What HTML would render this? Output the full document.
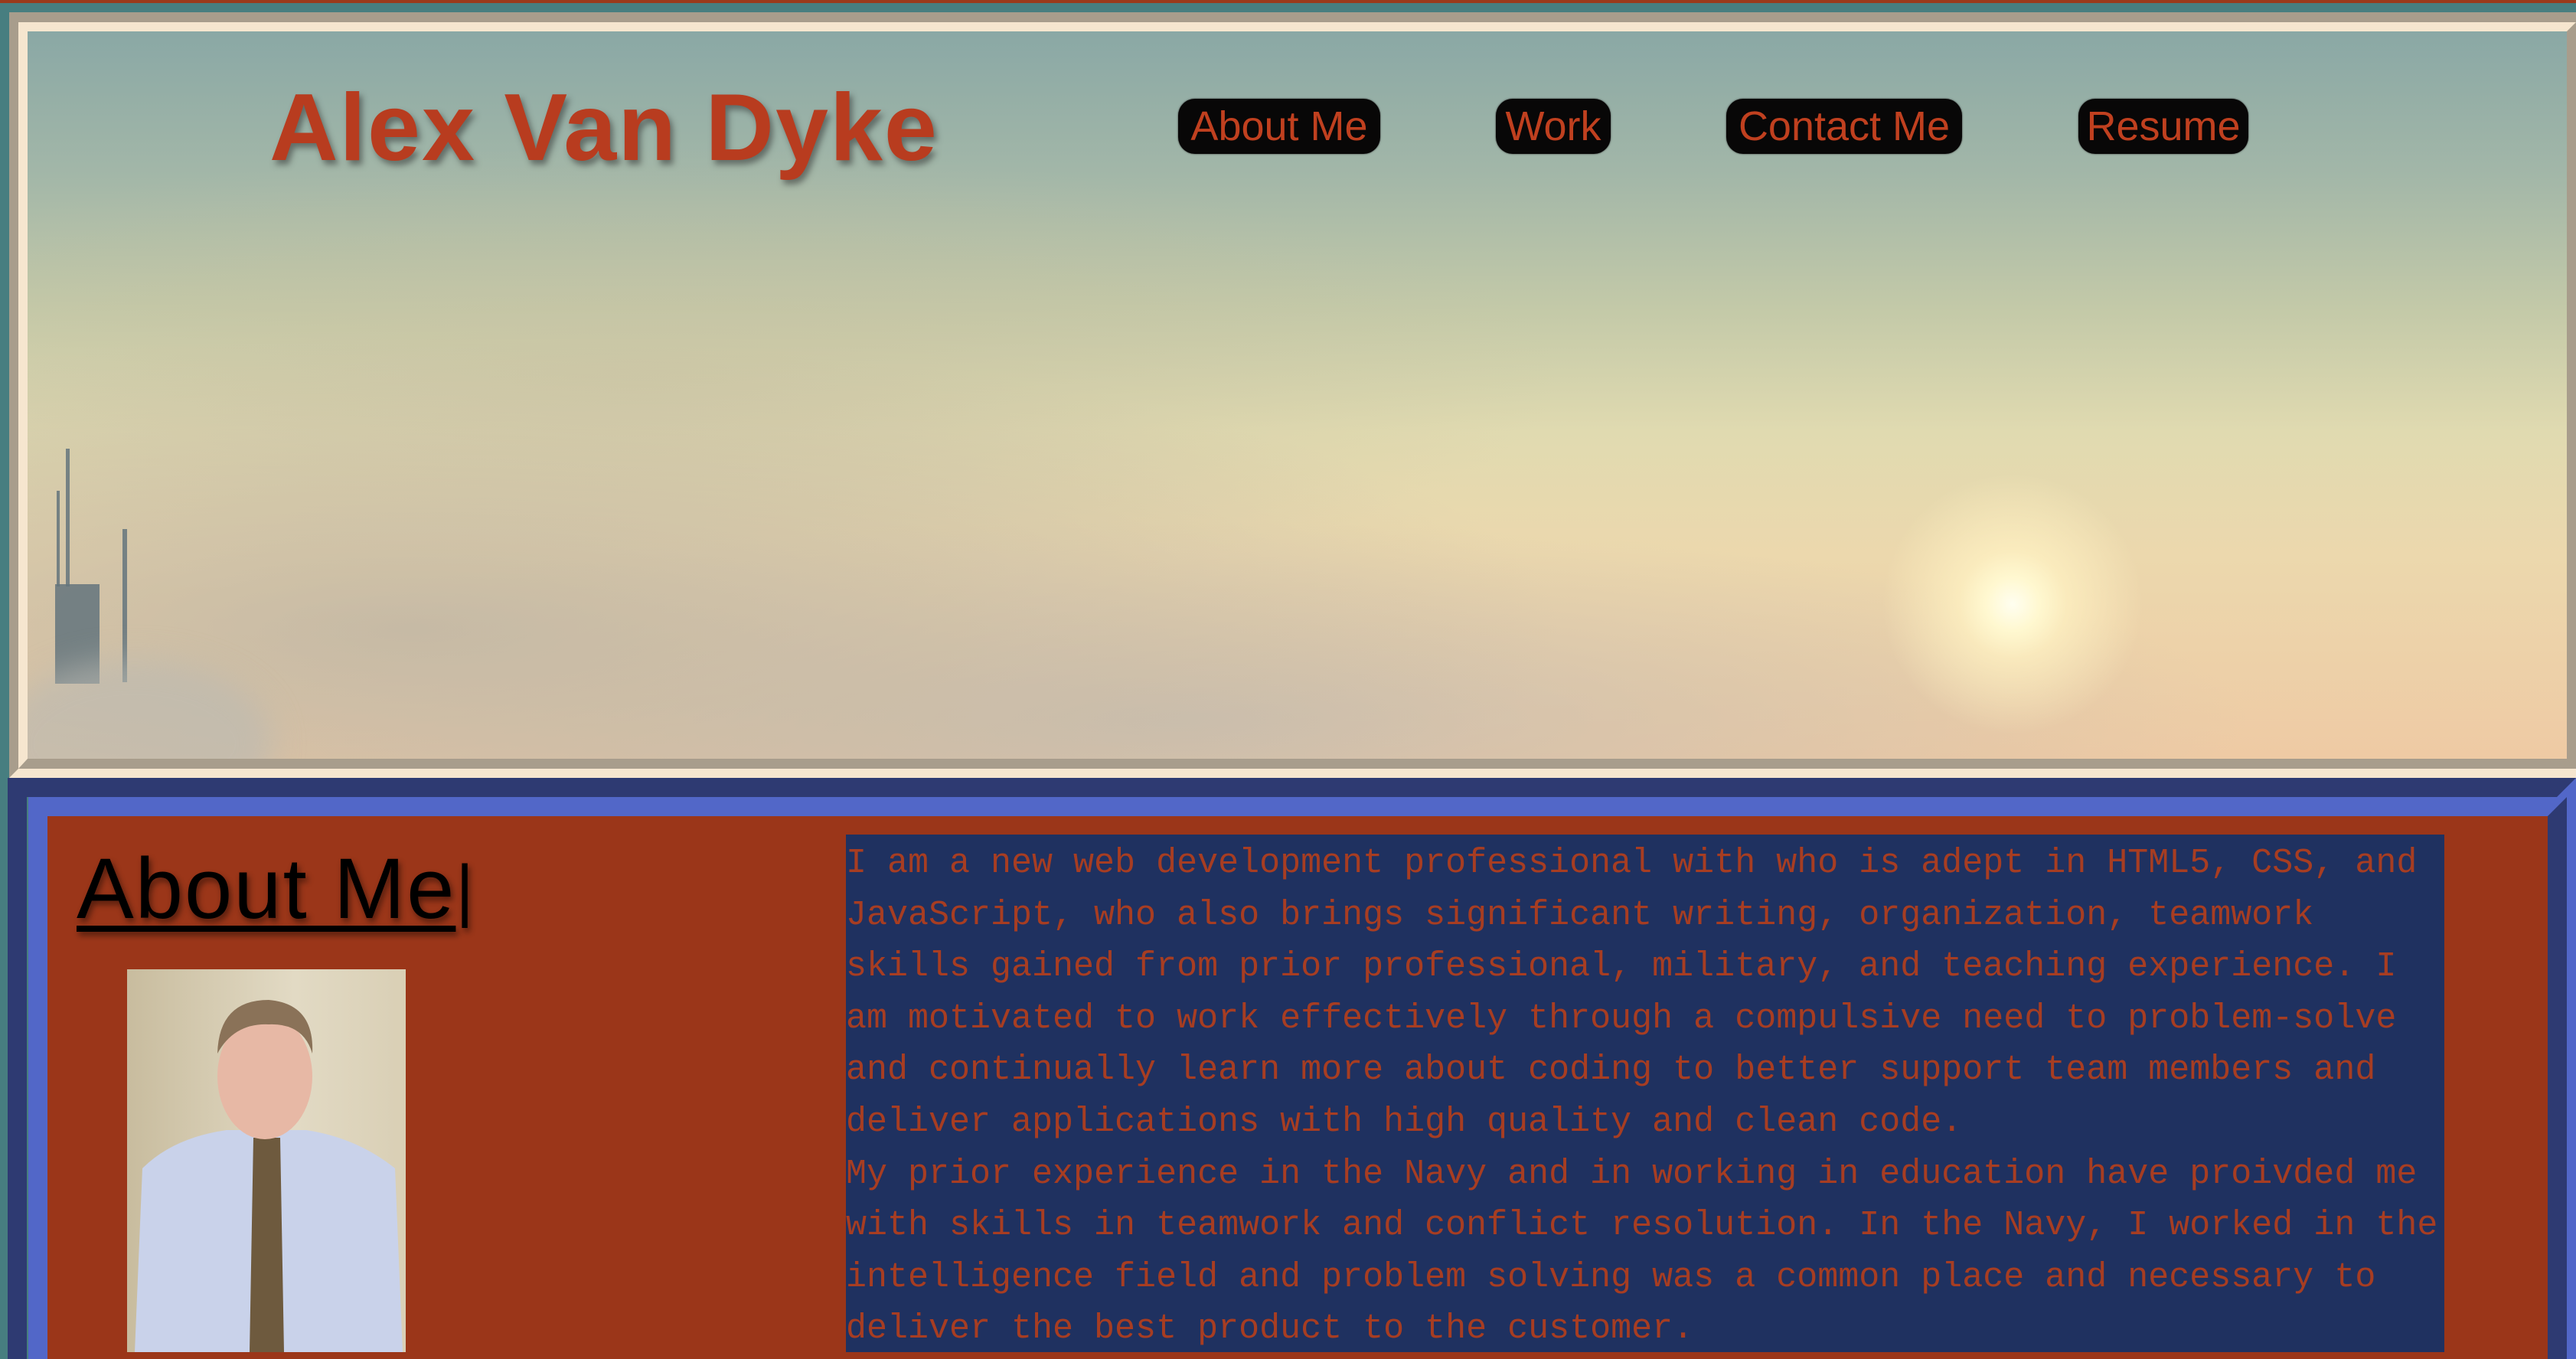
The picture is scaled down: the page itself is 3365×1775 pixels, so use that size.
<!DOCTYPE html>
<html><head><meta charset="utf-8"><style>
*{margin:0;padding:0;box-sizing:border-box}
html,body{width:3365px;height:1775px;overflow:hidden;background:#477e80;position:relative;font-family:"Liberation Sans",sans-serif}
.topstrip{position:absolute;left:0;top:0;width:3365px;height:4px;background:#9a3a1c}
.fa{position:absolute;left:12px;top:16px;width:3353px;height:1000px;border-style:solid;border-width:13px 0 12px 12px;border-color:#a89d8c #a89d8c #f6e6cf #a89d8c}
.fb{position:absolute;left:24px;top:29px;width:3341px;height:975px;border-style:solid;border-width:12px 12px 13px 12px;border-color:#f6e6cf #a89d8c #a89d8c #f6e6cf}
.sky{position:absolute;left:36px;top:41px;width:3317px;height:950px;overflow:hidden;
background:
radial-gradient(circle at 2593px 748px,#fffef0 0,#fff8d0 35px,rgba(255,242,195,.75) 70px,rgba(255,232,185,0) 170px),
radial-gradient(ellipse 1500px 380px at 500px 780px,rgba(192,182,164,.85),rgba(192,182,164,0)),
radial-gradient(ellipse 1400px 260px at 1500px 900px,rgba(196,188,176,.8),rgba(196,188,176,0)),
radial-gradient(ellipse 1200px 300px at 800px 450px,rgba(200,190,160,.5),rgba(200,190,160,0)),
linear-gradient(180deg,#8aa8a5 0%,#a3b7a8 20%,#c3c9a8 38%,#e0dab0 55%,#ecd8ad 72%,#eecaa4 100%);}
.tower{position:absolute;background:rgba(100,116,124,.85)}
.title{position:absolute;left:352px;top:96px;font-size:124px;font-weight:bold;color:#b83c1f;text-shadow:4px 6px 8px rgba(40,40,40,.5);letter-spacing:2px;white-space:nowrap}
.btn{position:absolute;top:129px;height:72px;background:#080707;border-radius:22px;color:#c0401f;font-size:54px;line-height:72px;text-align:center;white-space:nowrap;box-shadow:0 0 2px #333}
.main{position:absolute;left:10px;top:1016px;width:3355px;height:800px;border:25px solid;border-color:#2e3a72 #5267c8 #5267c8 #2e3a72}
.red{position:absolute;left:37px;top:1041px;width:3316px;height:800px;border:25px solid;border-color:#5267c8 #2e3a72 #2e3a72 #5267c8;background:#9b3619}
.h2{position:absolute;left:100px;top:1096px;font-size:112px;color:#000;letter-spacing:2px;text-decoration:underline;text-decoration-thickness:8px;text-underline-offset:10px;text-shadow:3px 5px 8px rgba(0,0,0,.45);white-space:nowrap}
.photo{position:absolute;left:166px;top:1266px;width:364px;height:500px;background:linear-gradient(90deg,#c8bc9e,#e2dac4 60%,#d9cfb5);overflow:hidden}
.txt{position:absolute;left:1105px;top:1090px;width:2088px;height:676px;background:#1f3160;color:#a73d22;font-family:"Liberation Mono",monospace;font-size:45px;line-height:67.6px;white-space:pre;padding-top:4px}
</style></head><body>
<div class="topstrip"></div>
<div class="fa"></div>
<div class="fb"></div>
<div class="sky">
<div class="tower" style="left:36px;top:722px;width:58px;height:130px"></div>
<div class="tower" style="left:50px;top:545px;width:5px;height:180px"></div>
<div class="tower" style="left:38px;top:600px;width:4px;height:125px"></div>
<div class="tower" style="left:124px;top:650px;width:6px;height:200px"></div>
<div style="position:absolute;left:-40px;top:820px;width:360px;height:220px;border-radius:50%;background:rgba(185,185,178,.6);filter:blur(20px)"></div>
</div>
<div class="title">Alex Van Dyke</div>
<div class="btn" style="left:1539px;width:264px">About Me</div>
<div class="btn" style="left:1954px;width:150px">Work</div>
<div class="btn" style="left:2255px;width:308px">Contact Me</div>
<div class="btn" style="left:2715px;width:222px">Resume</div>
<div class="main"></div>
<div class="red"></div>
<div class="h2">About Me<span style="text-decoration:none;display:inline-block;font-size:90px;vertical-align:6px">|</span></div>
<div class="photo"><svg width="364" height="500" viewBox="0 0 364 500">
<path d="M10 500 L20 260 Q60 220 130 210 L234 210 Q300 220 350 260 L360 500Z" fill="#c9d2ea"/>
<path d="M165 220 L200 220 L205 500 L160 500Z" fill="#6e5a3e"/>
<ellipse cx="180" cy="140" rx="62" ry="82" fill="#e7b8a5"/>
<path d="M118 110 Q120 40 185 40 Q245 45 242 110 Q230 70 185 72 Q140 70 118 110Z" fill="#8a7258"/>
</svg></div>
<div class="txt">I am a new web development professional with who is adept in HTML5, CSS, and
JavaScript, who also brings significant writing, organization, teamwork
skills gained from prior professional, military, and teaching experience. I
am motivated to work effectively through a compulsive need to problem-solve
and continually learn more about coding to better support team members and
deliver applications with high quality and clean code.
My prior experience in the Navy and in working in education have proivded me
with skills in teamwork and conflict resolution. In the Navy, I worked in the
intelligence field and problem solving was a common place and necessary to
deliver the best product to the customer.</div>
</body></html>
